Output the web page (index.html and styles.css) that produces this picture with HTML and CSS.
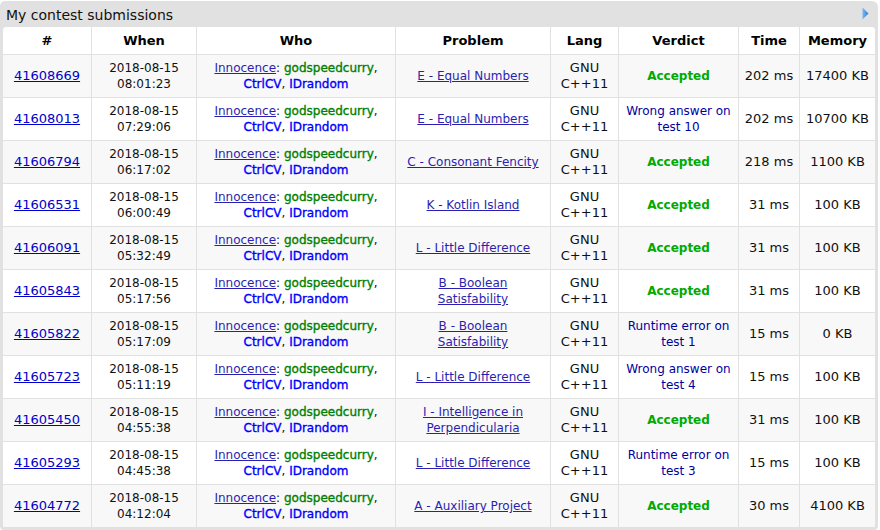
FILE: index.html
```html
<!DOCTYPE html>
<html>
<head>
<meta charset="utf-8">
<link rel="stylesheet" href="styles.css">
</head>
<body>
<div class="box">
  <div class="title">
    <span>My contest submissions</span>
    <svg class="arrow" width="7" height="13" viewBox="0 0 7 13"><defs><linearGradient id="g" x1="0" x2="1" y1="0" y2="0"><stop offset="0" stop-color="#7ab8f2"/><stop offset="1" stop-color="#2a7fd8"/></linearGradient></defs><polygon points="0.5,0.5 6.5,6.5 0.5,12.5" fill="url(#g)"/></svg>
  </div>
  <div class="inner">
    <table class="subs">
      <thead>
        <tr><th class="c1">#</th><th class="c2">When</th><th class="c3">Who</th><th class="c4">Problem</th><th class="c5">Lang</th><th class="c6">Verdict</th><th class="c7">Time</th><th class="c8">Memory</th></tr>
      </thead>
      <tbody>
        <tr class="odd"><td><a class="id" href="#">41608669</a></td><td class="small">2018-08-15<br>08:01:23</td><td class="small"><a href="#" class="team">Innocence</a>: <span class="green">godspeedcurry</span>,<br><span class="blue">CtrlCV</span>, <span class="blue">IDrandom</span></td><td class="small"><a href="#" class="prob">E - Equal Numbers</a></td><td>GNU<br>C++11</td><td class="small"><span class="ok">Accepted</span></td><td>202 ms</td><td>17400 KB</td></tr>
        <tr><td><a class="id" href="#">41608013</a></td><td class="small">2018-08-15<br>07:29:06</td><td class="small"><a href="#" class="team">Innocence</a>: <span class="green">godspeedcurry</span>,<br><span class="blue">CtrlCV</span>, <span class="blue">IDrandom</span></td><td class="small"><a href="#" class="prob">E - Equal Numbers</a></td><td>GNU<br>C++11</td><td class="small"><span class="rej">Wrong answer on test 10</span></td><td>202 ms</td><td>10700 KB</td></tr>
        <tr class="odd"><td><a class="id" href="#">41606794</a></td><td class="small">2018-08-15<br>06:17:02</td><td class="small"><a href="#" class="team">Innocence</a>: <span class="green">godspeedcurry</span>,<br><span class="blue">CtrlCV</span>, <span class="blue">IDrandom</span></td><td class="small"><a href="#" class="prob">C - Consonant Fencity</a></td><td>GNU<br>C++11</td><td class="small"><span class="ok">Accepted</span></td><td>218 ms</td><td>1100 KB</td></tr>
        <tr><td><a class="id" href="#">41606531</a></td><td class="small">2018-08-15<br>06:00:49</td><td class="small"><a href="#" class="team">Innocence</a>: <span class="green">godspeedcurry</span>,<br><span class="blue">CtrlCV</span>, <span class="blue">IDrandom</span></td><td class="small"><a href="#" class="prob">K - Kotlin Island</a></td><td>GNU<br>C++11</td><td class="small"><span class="ok">Accepted</span></td><td>31 ms</td><td>100 KB</td></tr>
        <tr class="odd"><td><a class="id" href="#">41606091</a></td><td class="small">2018-08-15<br>05:32:49</td><td class="small"><a href="#" class="team">Innocence</a>: <span class="green">godspeedcurry</span>,<br><span class="blue">CtrlCV</span>, <span class="blue">IDrandom</span></td><td class="small"><a href="#" class="prob">L - Little Difference</a></td><td>GNU<br>C++11</td><td class="small"><span class="ok">Accepted</span></td><td>31 ms</td><td>100 KB</td></tr>
        <tr><td><a class="id" href="#">41605843</a></td><td class="small">2018-08-15<br>05:17:56</td><td class="small"><a href="#" class="team">Innocence</a>: <span class="green">godspeedcurry</span>,<br><span class="blue">CtrlCV</span>, <span class="blue">IDrandom</span></td><td class="small"><a href="#" class="prob">B - Boolean<br>Satisfability</a></td><td>GNU<br>C++11</td><td class="small"><span class="ok">Accepted</span></td><td>31 ms</td><td>100 KB</td></tr>
        <tr class="odd"><td><a class="id" href="#">41605822</a></td><td class="small">2018-08-15<br>05:17:09</td><td class="small"><a href="#" class="team">Innocence</a>: <span class="green">godspeedcurry</span>,<br><span class="blue">CtrlCV</span>, <span class="blue">IDrandom</span></td><td class="small"><a href="#" class="prob">B - Boolean<br>Satisfability</a></td><td>GNU<br>C++11</td><td class="small"><span class="rej">Runtime error on test 1</span></td><td>15 ms</td><td>0 KB</td></tr>
        <tr><td><a class="id" href="#">41605723</a></td><td class="small">2018-08-15<br>05:11:19</td><td class="small"><a href="#" class="team">Innocence</a>: <span class="green">godspeedcurry</span>,<br><span class="blue">CtrlCV</span>, <span class="blue">IDrandom</span></td><td class="small"><a href="#" class="prob">L - Little Difference</a></td><td>GNU<br>C++11</td><td class="small"><span class="rej">Wrong answer on test 4</span></td><td>15 ms</td><td>100 KB</td></tr>
        <tr class="odd"><td><a class="id" href="#">41605450</a></td><td class="small">2018-08-15<br>04:55:38</td><td class="small"><a href="#" class="team">Innocence</a>: <span class="green">godspeedcurry</span>,<br><span class="blue">CtrlCV</span>, <span class="blue">IDrandom</span></td><td class="small"><a href="#" class="prob">I - Intelligence in<br>Perpendicularia</a></td><td>GNU<br>C++11</td><td class="small"><span class="ok">Accepted</span></td><td>31 ms</td><td>100 KB</td></tr>
        <tr><td><a class="id" href="#">41605293</a></td><td class="small">2018-08-15<br>04:45:38</td><td class="small"><a href="#" class="team">Innocence</a>: <span class="green">godspeedcurry</span>,<br><span class="blue">CtrlCV</span>, <span class="blue">IDrandom</span></td><td class="small"><a href="#" class="prob">L - Little Difference</a></td><td>GNU<br>C++11</td><td class="small"><span class="rej">Runtime error on test 3</span></td><td>15 ms</td><td>100 KB</td></tr>
        <tr class="odd"><td><a class="id" href="#">41604772</a></td><td class="small">2018-08-15<br>04:12:04</td><td class="small"><a href="#" class="team">Innocence</a>: <span class="green">godspeedcurry</span>,<br><span class="blue">CtrlCV</span>, <span class="blue">IDrandom</span></td><td class="small"><a href="#" class="prob">A - Auxiliary Project</a></td><td>GNU<br>C++11</td><td class="small"><span class="ok">Accepted</span></td><td>30 ms</td><td>4100 KB</td></tr>
      </tbody>
    </table>
  </div>
</div>
</body>
</html>
```
FILE: styles.css
```css
html, body {
  margin: 0;
  padding: 0;
  background: #ffffff;
}
body {
  font-family: "DejaVu Sans", Verdana, sans-serif;
  font-size: 13px;
  color: #111111;
}
.box {
  width: 878px;
  box-sizing: border-box;
  margin-top: 1px;
  background: #e1e1e1;
  border-radius: 5px 6px 4px 4px;
  padding: 0 3px 3px 3px;
}
.title {
  height: 26px;
  display: flex;
  align-items: center;
  justify-content: space-between;
  padding-left: 3px;
  padding-right: 6px;
  font-size: 14px;
  color: #111111;
}
.title span {
  padding-top: 2px;
}
.arrow {
  display: block;
  margin-top: -2px;
}
.inner {
  background: #ffffff;
  border-radius: 4px 4px 0 0;
  overflow: hidden;
}
.subs {
  width: 872px;
  table-layout: fixed;
  border-collapse: separate;
  border-spacing: 0;
}
.subs th, .subs td {
  box-sizing: border-box;
  text-align: center;
  vertical-align: middle;
  line-height: 16px;
  padding: 5px 4px;
  border-left: 1px solid #e1e1e1;
}
.subs th:first-child, .subs td:first-child {
  border-left: none;
}
.subs th {
  font-weight: bold;
  font-size: 13px;
  color: #000000;
  padding: 6px 4px 5px 4px;
  background: #ffffff;
}
.subs td {
  border-top: 1px solid #e1e1e1;
  color: #111111;
}
.subs tr.odd td {
  background: #f8f8f8;
}
.c1 { width: 88px; }
.c2 { width: 105px; }
.c3 { width: 199px; }
.c4 { width: 155px; }
.c5 { width: 68px; }
.c6 { width: 120px; }
.c7 { width: 61px; }
.c8 { width: 76px; }
.small {
  font-size: 12px;
}
a {
  color: #2a1fb0;
  text-decoration: underline;
}
a.id {
  color: #0000cc;
}
.green {
  color: #008000;
  -webkit-text-stroke: 0.35px #008000;
}
.blue {
  color: #0000ff;
  -webkit-text-stroke: 0.35px #0000ff;
}
.ok {
  color: #00aa00;
  font-weight: bold;
}
.rej {
  color: #0000a0;
}
```
